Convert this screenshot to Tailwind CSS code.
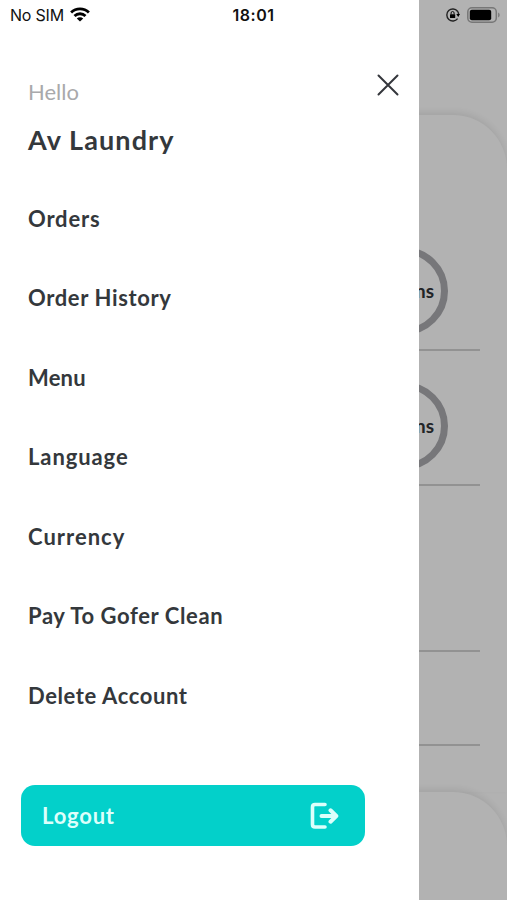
<!DOCTYPE html>
<html lang="en">
<head>
<meta charset="utf-8">
<title>Menu</title>
<script src="https://cdn.jsdelivr.net/npm/@tailwindcss/browser@4"></script>
</head>
<body class="bg-[#b2b2b2]">
<div class="relative w-[507px] h-[900px] overflow-hidden bg-[#b2b2b2] font-['Lato',sans-serif]">
  <!-- dimmed page behind the drawer -->
  <main class="flex flex-col h-full pt-[115px]">
    <section class="h-[677px] shrink-0 rounded-t-[54px] bg-[#b2b2b2] shadow-[0_-3px_6px_rgba(0,0,0,0.08)] pt-[101px] pr-[27px]">
      <div class="h-[135px] border-b-2 border-[#929292] flex justify-end pt-[31px] pr-8">
        <div class="size-[88px] rounded-full border-[7px] border-[#77777a] flex items-center justify-end pr-[7px] text-[19px] font-bold text-[#222427]">ms</div>
      </div>
      <div class="h-[135px] border-b-2 border-[#929292] flex justify-end pt-[31px] pr-8">
        <div class="size-[88px] rounded-full border-[7px] border-[#77777a] flex items-center justify-end pr-[7px] text-[19px] font-bold text-[#222427]">ms</div>
      </div>
      <div class="h-[166px] border-b-2 border-[#929292]"></div>
      <div class="h-[94px] border-b-2 border-[#929292]"></div>
    </section>
    <section class="h-[160px] shrink-0 rounded-t-[54px] bg-[#b2b2b2] shadow-[0_-3px_6px_rgba(0,0,0,0.08)]"></section>
  </main>

  <!-- drawer -->
  <aside class="absolute inset-y-0 left-0 w-[419px] bg-white text-[#34383c] flex flex-col">
    <header class="flex justify-between pt-[74px] pl-7 pr-5 h-[178.5px]">
      <div>
        <p class="text-[22px] leading-[35px] text-[#a9a9ab]">Hello</p>
        <h1 class="text-[27px] leading-9 mt-[13px] font-bold tracking-[1.1px]">Av Laundry</h1>
      </div>
      <svg class="size-[22px]" viewBox="0 0 22 22" fill="none" stroke="#34363c" stroke-width="2" stroke-linecap="round"><path d="M1.5 1.5 20.5 20.5M20.5 1.5 1.5 20.5"/></svg>
    </header>
    <nav class="flex flex-col pl-7 text-[22px] leading-[79.6px] font-bold">
      <a class="tracking-[0.8px]">Orders</a>
      <a class="tracking-[0.63px]">Order History</a>
      <a class="tracking-[0.2px]">Menu</a>
      <a class="tracking-[0.9px]">Language</a>
      <a class="tracking-[1px]">Currency</a>
      <a class="tracking-[0.6px]">Pay To Gofer Clean</a>
      <a class="tracking-[0.6px]">Delete Account</a>
    </nav>
    <button class="mt-[49.8px] ml-[21px] w-[344px] h-[61px] rounded-[14px] bg-[#03d0ca] flex items-center justify-between pl-[21px] pr-[26px] text-[#dcfffb] text-[22px] font-bold">
      <span class="tracking-[0.8px]">Logout</span>
      <svg class="w-[29px] h-[28px]" viewBox="0 0 29 28" fill="none" stroke="#dcfffb" stroke-width="3.6" stroke-linecap="round" stroke-linejoin="round"><path d="M15 2.5H5Q2.5 2.5 2.5 5V22.5Q2.5 25 5 25H15"/><path d="M11.5 14H26M20.5 8.3 26.3 14 20.5 19.7" stroke-width="4"/></svg>
    </button>
  </aside>

  <!-- status bar -->
  <div class="absolute inset-x-0 top-0 h-[29px] flex items-center justify-between pl-[10px] pr-[7px] text-[#111] font-['Inter',sans-serif]">
    <div class="w-[158px] flex items-center gap-[6px] text-[16px]"><span class="tracking-[-0.2px]">No SIM</span>
      <svg class="w-5 h-[15px]" viewBox="0 0 20 15"><g fill="none" stroke="#000" stroke-width="2.8"><path d="M1.1 5.4A12.8 12.8 0 0 1 18.9 5.4"/><path d="M4.5 9A7.8 7.8 0 0 1 15.5 9"/></g><path d="M10 14.6 6.8 11.5A4.6 4.6 0 0 1 13.2 11.5Z"/></svg>
    </div>
    <span class="text-[16px] font-semibold tracking-[0.5px]">18:01</span>
    <div class="w-[161px] flex items-center justify-end gap-[7px]">
      <svg class="size-[14px]" viewBox="0 0 14 14"><path d="M11.5 3.2A6 6 0 1 0 11.6 10.6M12.6 7A6 6 0 0 0 11.5 3.2" fill="none" stroke="#222" stroke-width="1.4"/><path d="M10.3 6.1H14L12.2 9Z"/><rect x="4" y="6.3" width="5.2" height="3.8" rx=".5"/><path d="M5.1 6.5V5a1.5 1.5 0 0 1 3 0v1.5" fill="none" stroke="#111"/></svg>
      <svg class="w-[33px] h-[16px]" viewBox="0 0 33 16"><rect x=".8" y=".8" width="28.5" height="14.4" rx="4.2" fill="none" stroke="#777" stroke-width="1.5"/><rect x="2.8" y="2.8" width="21.4" height="10.4" rx="2"/><path d="M31 5.4Q32.8 6.3 32.8 8T31 10.6Z" fill="#808080"/></svg>
    </div>
  </div>
</div>
</body>
</html>
